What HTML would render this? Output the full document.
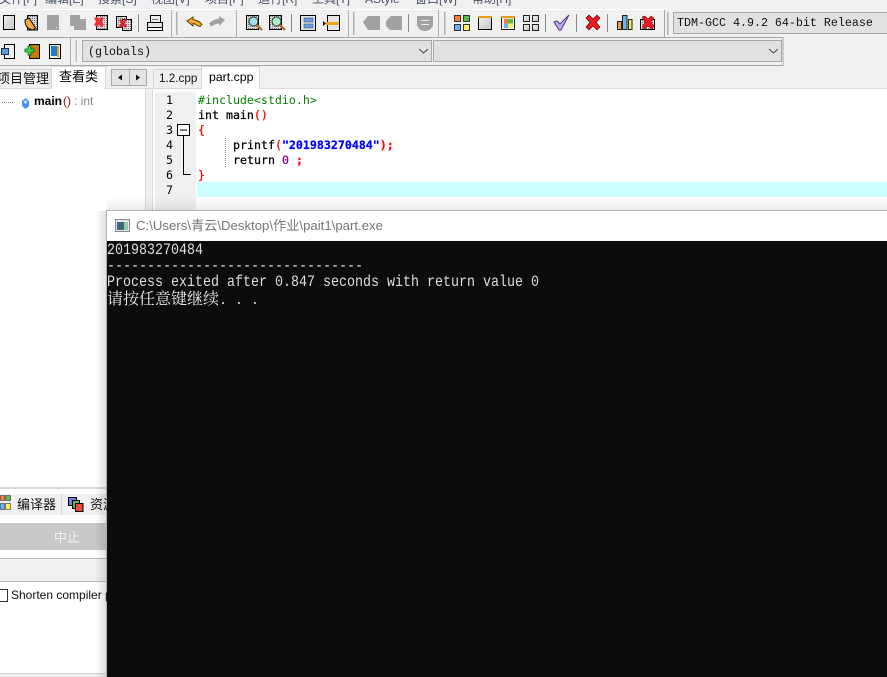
<!DOCTYPE html>
<html><head><meta charset="utf-8">
<style>
html,body{margin:0;padding:0;width:887px;height:677px;overflow:hidden;background:#f0f0f0}
body{position:relative;font-family:"Liberation Sans","Noto Sans CJK SC",sans-serif}
.a{position:absolute}
.t{position:absolute;white-space:pre;line-height:15px}
.ed{font-family:"DejaVu Sans Mono","Liberation Mono",monospace;font-size:11.62px;color:#000;left:198px}
.ln{font-family:"DejaVu Sans Mono",monospace;font-size:11.62px;color:#000;left:166px}
.b{font-weight:bold}
.s{-webkit-text-stroke:.25px currentColor}
.con{position:absolute;left:107px;font-family:"Liberation Mono","Noto Sans CJK SC",monospace;font-size:16px;line-height:16px;color:#dedede;white-space:pre;transform:scaleX(.8333);transform-origin:0 0}
.m{position:absolute;top:-8px;font-size:12px;line-height:14px;color:#4a5468;white-space:pre}
</style></head><body>
<div class="m" style="left:-1px">文件[F]</div><div class="m" style="left:45px">编辑[E]</div><div class="m" style="left:98px">搜索[S]</div><div class="m" style="left:151px">视图[V]</div><div class="m" style="left:205px">项目[P]</div><div class="m" style="left:258px">运行[R]</div><div class="m" style="left:312px">工具[T]</div><div class="m" style="left:365px">AStyle</div><div class="m" style="left:415px">窗口[W]</div><div class="m" style="left:472px">帮助[H]</div>

<svg class="a" style="left:0;top:0" width="887" height="677" viewBox="0 0 887 677">
<defs><linearGradient id="g" x1="0" y1="0" x2="1" y2="1"><stop offset="0" stop-color="#f2f2f2"/><stop offset="1" stop-color="#c4c4c4"/></linearGradient>
<pattern id="d" width="2" height="2" patternUnits="userSpaceOnUse"><rect width="2" height="2" fill="#d8d8d8"/><rect width="1" height="1" fill="#777"/></pattern></defs>
<!-- toolbar lines -->
<rect x="0" y="9" width="664" height="1" fill="#fff"/>
<rect x="0" y="37" width="783" height="1" fill="#a8a8a8"/>
<rect x="0" y="65" width="783" height="1" fill="#a8a8a8"/>
<rect x="70" y="38" width="1" height="27" fill="#b0b0b0"/>
<rect x="75.500" y="40" width="1.500" height="22" fill="#c0c0c0"/>
<rect x="664" y="10" width="1" height="27" fill="#a8a8a8"/>
<g fill="#b0b0b0">
<rect x="138" y="14" width="1" height="18" fill="#888"/><rect x="171" y="10" width="1" height="27"/><rect x="176" y="12" width="1.500" height="23"/>
<rect x="236" y="10" width="1" height="27"/><rect x="291" y="14" width="1" height="18" fill="#888"/><rect x="348" y="10" width="1" height="27"/><rect x="353" y="12" width="1.500" height="23"/>
<rect x="408" y="14" width="1" height="18" fill="#888"/><rect x="438" y="10" width="1" height="27"/><rect x="444" y="12" width="1.500" height="23"/>
<rect x="545" y="14" width="1" height="18" fill="#888"/><rect x="576" y="14" width="1" height="18" fill="#888"/><rect x="607" y="14" width="1" height="18" fill="#888"/>
<rect x="667" y="12" width="1.500" height="23"/>
</g>
<!-- new -->
<rect x="3.500" y="15.500" width="11" height="14" fill="url(#g)" stroke="#000"/>
<!-- open -->
<rect x="27.500" y="15.500" width="10" height="14.500" fill="url(#d)" stroke="#000"/>
<path d="M25 20 Q25 29 33 30 L35.500 28 L29 18Z" fill="#f5a742" stroke="#000"/>
<!-- disabled save -->
<rect x="47" y="15" width="12" height="15" fill="#a2a2a2"/><rect x="56" y="27" width="1" height="1" fill="#eee"/>
<path d="M70 15h10v4h6v11h-12v-4h-4z" fill="#a2a2a2"/>
<!-- close -->
<rect x="96.500" y="15.500" width="11" height="14" fill="url(#d)" stroke="#000"/>
<path d="M94 18l3-1 2 2 2-2 3 1-2 3.500 2 3.500-2 2-3-2-2 2-3-2 2-3.500z" fill="#f0303a"/>
<!-- close all -->
<rect x="116.500" y="16.500" width="10" height="11" fill="url(#d)" stroke="#000"/>
<rect x="122.500" y="19.500" width="9" height="11" fill="url(#d)" stroke="#000"/>
<path d="M119 20l2-1 2 2 2-2 2 1-2 3 2 3-2 2-2-2-2 2-2-2 2-3z" fill="#e02430"/>
<!-- print -->
<path d="M150.500 15.500h10v7h-10z" fill="#eee" stroke="#000"/>
<path d="M147.500 22.500h15v5h-15z" fill="#e8e8e8" stroke="#000"/>
<rect x="147.500" y="27.500" width="15" height="3" fill="#fff" stroke="#000"/>
<rect x="152" y="19" width="6" height="1" fill="#777"/>
<!-- undo -->
<path d="M187 21l6-4v2.500q6 1 9 5l-2 2-3-1q-2-2-4-2v2.500z" fill="#f3a828" stroke="#5a3a08" stroke-width=".9"/>
<path d="M225 20l-6-4v2.500q-6 1-10 5l2 3 4-2q2-1 4-1v2.500z" fill="#a2a2a2"/>
<!-- find -->
<rect x="246.500" y="15.500" width="12" height="14" fill="url(#d)" stroke="#000"/>
<circle cx="253.500" cy="21.500" r="4.500" fill="#9fe1f0" stroke="#333"/><path d="M257 25l5 5" stroke="#b56e10" stroke-width="2.200"/>
<rect x="269.500" y="15.500" width="12" height="14" fill="url(#d)" stroke="#000"/>
<circle cx="276.500" cy="21.500" r="4.500" fill="#a8f0c8" stroke="#333"/><path d="M280 25l5 5" stroke="#b56e10" stroke-width="2.200"/>
<!-- windows -->
<rect x="300.500" y="15.500" width="15" height="15" fill="#e4e4e4" stroke="#000"/>
<rect x="304" y="18" width="9" height="4" fill="#6d9ee0" stroke="#34557f" stroke-width=".6"/><rect x="304" y="24" width="9" height="4" fill="#6d9ee0" stroke="#34557f" stroke-width=".6"/>
<rect x="327.500" y="15.500" width="12" height="15" fill="#e4e4e4" stroke="#000"/>
<rect x="326" y="22" width="13" height="3" fill="#f2a11c"/><path d="M323 21l3 2.500-3 2.500z" fill="#000"/>
<!-- disabled group -->
<path d="M363 22l5-6h12v14h-12z" fill="#a2a2a2"/>
<path d="M386 21l5-5h11v14h-12l-4-4z" fill="#a2a2a2"/>
<path d="M417 16h16v9q-2 6-8 6t-8-6z" fill="#a2a2a2"/><rect x="421" y="20" width="8" height="1" fill="#eee"/><rect x="421" y="24" width="8" height="1" fill="#eee"/>
<!-- grid -->
<rect x="454.500" y="15.500" width="6" height="6" fill="#f57e3e" stroke="#333"/><rect x="463.500" y="15.500" width="6" height="6" fill="#57b947" stroke="#333"/><rect x="454.500" y="24.500" width="6" height="6" fill="#6cb1ee" stroke="#333"/><rect x="463.500" y="24.500" width="6" height="6" fill="#fdf05c" stroke="#333"/>
<rect x="478.500" y="16.500" width="13" height="13" fill="url(#g)" stroke="#000"/><rect x="478" y="16" width="14" height="2" fill="#e99b17"/>
<rect x="501.500" y="16.500" width="13" height="13" fill="#eee" stroke="#222"/><rect x="501" y="16" width="14" height="2" fill="#e99b17"/><rect x="504" y="19" width="4" height="4.500" fill="#f17d3c"/><rect x="508" y="19" width="5" height="4.500" fill="#5bba48"/><rect x="504" y="23.500" width="4" height="4.500" fill="#6cb1ee"/><rect x="508" y="23.500" width="5" height="4.500" fill="#fdf05c"/>
<g fill="url(#g)" stroke="#222"><rect x="523.500" y="15.500" width="6" height="6"/><rect x="532.500" y="15.500" width="6" height="6"/><rect x="523.500" y="24.500" width="6" height="6"/><rect x="532.500" y="24.500" width="6" height="6"/></g>
<!-- check -->
<path d="M554 22l3-1 3 3 9-9-8 15h-2z" fill="#c4a8f0" stroke="#4f3a86"/>
<!-- X -->
<path d="M589 15l4 4 4-4 3 3-4 4.500 4 4.500-3 3-4-4-4 4-3-3 4-4.500-4-4.500z" fill="#ee1820" stroke="#400" stroke-width=".6"/>
<!-- bars -->
<rect x="617.500" y="21.500" width="4" height="8" fill="#f29a4a" stroke="#222"/><rect x="622.500" y="15.500" width="4.500" height="14" fill="#6fb0e8" stroke="#222"/><rect x="628.500" y="19.500" width="3.500" height="10" fill="#f7ee50" stroke="#222"/>
<rect x="640.500" y="19.500" width="14" height="10" fill="url(#d)" stroke="#000"/>
<path d="M642 17l3-1 3 3 3-3 3 2-3 4 3 4-2 3-4-3-3 3-3-2 3-4.500z" fill="#ee1820" stroke="#400" stroke-width=".5"/>
<!-- row 2 icons -->
<rect x="4.500" y="44.500" width="10" height="14" fill="#eee" stroke="#000"/><rect x="1.500" y="48.500" width="7" height="6" fill="#5a9be0" stroke="#234"/>
<rect x="29.500" y="44.500" width="10" height="14" fill="#c77a12" stroke="#000"/>
<path d="M28 46h3v3h3v3h-3v3h-3v-3h-3v-3h3z" fill="#3dd63d" stroke="#063" stroke-width=".8"/>
<rect x="49.500" y="44.500" width="11" height="14" fill="#eee" stroke="#000"/><rect x="51" y="46" width="6" height="10" fill="#1f7fc8"/><rect x="57" y="46" width="2" height="11" fill="#e99b17"/>
<!-- combos -->
<rect x="782.500" y="37" width="1" height="29" fill="#a8a8a8"/>
<rect x="82.500" y="40.500" width="349" height="21" fill="#e1e1e1" stroke="#a8a8a8"/>
<rect x="433.500" y="40.500" width="348" height="21" fill="#e1e1e1" stroke="#a8a8a8"/>
<path d="M419 49l4.500 4 4.500-4M769 49l4.500 4 4.500-4" fill="none" stroke="#444"/>
<!-- TDM -->
<rect x="673.500" y="12.500" width="214" height="21" fill="#e1e1e1" stroke="#a8a8a8"/>
<!-- left tabs -->
<rect x="0" y="88" width="887" height="1" fill="#dcdcdc"/>
<rect x="-1" y="69.500" width="51" height="19" fill="#f0f0f0" stroke="#d8d8d8"/>
<rect x="51.500" y="66.500" width="54" height="22" fill="#fff" stroke="#d8d8d8"/>
<rect x="51.500" y="88" width="53" height="1" fill="#fff"/>
<rect x="111.500" y="69.500" width="35" height="16" fill="#e4e4e4" stroke="#aaa"/><rect x="129" y="70" width="1" height="15" fill="#aaa"/>
<path d="M118 77.500l4-3v6zM136 74.500l0 6 4-3z" fill="#111"/>
<rect x="0" y="89" width="146" height="400" fill="#fff"/>
<rect x="145" y="88" width="1" height="400" fill="#d8d8d8"/>
<!-- right tabs -->
<rect x="153.500" y="69.500" width="48" height="19" fill="#f0f0f0" stroke="#d8d8d8"/>
<rect x="201.500" y="66.500" width="58" height="22" fill="#fff" stroke="#d8d8d8"/>
<rect x="202" y="88" width="57" height="1" fill="#fff"/>
<rect x="152" y="89" width="735" height="125" fill="#fff"/>
<rect x="152" y="89" width="1" height="125" fill="#d8d8d8"/>
<rect x="155" y="92" width="41" height="122" fill="#f0f0f0"/>
<rect x="197" y="182" width="690" height="15" fill="#ccffff"/>
<path d="M225.500 138v30" stroke="#888" stroke-dasharray="1 1" fill="none"/>
<rect x="177.500" y="124.500" width="12" height="11" fill="#fff" stroke="#000"/><path d="M180 130h7" stroke="#000"/>
<path d="M183.500 136v38.500h7" stroke="#000" fill="none"/>
<!-- tree -->
<path d="M2 102.500h11" stroke="#888" stroke-dasharray="1 1"/>
<path d="M25.500 98l3.500 3v5l-3.500 3-3.500-3v-5z" fill="#4a90ea"/><path d="M25.500 100l2 2-2 2-2-2z" fill="#cfe6ff"/>
<!-- bottom panel -->
<rect x="0" y="488" width="108" height="189" fill="#fff"/>
<rect x="0" y="487" width="108" height="2" fill="#d8d8d8"/>
<rect x="0" y="494" width="108" height="21" fill="#f0f0f0"/>
<rect x="61" y="494" width="1" height="21" fill="#d8d8d8"/>
<rect x="0" y="523" width="108" height="27" fill="#c8c8c8"/>
<rect x="0" y="558" width="108" height="24" fill="#f0f0f0"/>
<rect x="0" y="558" width="108" height="1" fill="#bbb"/><rect x="0" y="581" width="108" height="1" fill="#bbb"/>
<rect x="0" y="673" width="108" height="1" fill="#d8d8d8"/><rect x="0" y="674" width="108" height="3" fill="#f0f0f0"/>
<rect x="-1.500" y="589.500" width="9" height="12" fill="#fff" stroke="#333"/>
<rect x="0.500" y="495.500" width="4" height="5" fill="#f57e3e" stroke="#333" stroke-width=".6"/><rect x="5.500" y="495.500" width="5" height="5" fill="#57b947" stroke="#333" stroke-width=".6"/><rect x="0.500" y="503.500" width="4" height="6" fill="#6cb1ee" stroke="#333" stroke-width=".6"/><rect x="5.500" y="503.500" width="5" height="6" fill="#fdf05c" stroke="#333" stroke-width=".6"/>
<rect x="68.500" y="497.500" width="8" height="8" fill="#7b7be0" stroke="#000"/><rect x="72.500" y="500.500" width="7" height="8" fill="#4fc04f" stroke="#000"/><rect x="75.500" y="503.500" width="7.500" height="8" fill="#ee4a3a" stroke="#000"/>
<!-- console shadow -->
<defs><linearGradient id="sh" x1="0" x2="1"><stop offset="0" stop-color="#000" stop-opacity="0"/><stop offset="1" stop-color="#000" stop-opacity=".13"/></linearGradient>
<linearGradient id="sv" x1="0" x2="0" y1="0" y2="1"><stop offset="0" stop-color="#000" stop-opacity="0"/><stop offset="1" stop-color="#000" stop-opacity=".08"/></linearGradient></defs>
<rect x="95" y="211" width="12" height="466" fill="url(#sh)"/>
<rect x="107" y="197" width="780" height="14" fill="url(#sv)"/>
<!-- console -->
<rect x="107" y="211" width="780" height="466" fill="#fff"/>
<rect x="107" y="241" width="780" height="436" fill="#0c0c0c"/>
<rect x="106" y="210" width="781" height="1" fill="#b0b0b0"/><rect x="106" y="210" width="1" height="467" fill="#b0b0b0"/>
<rect x="115.500" y="219.500" width="14" height="12" fill="#e8e8e8" stroke="#8a8a8a"/><rect x="117" y="222" width="7" height="8" fill="#3a6a78"/><rect x="124" y="222" width="4" height="8" fill="#9ac8a8"/>
</svg>

<div class="t" style="left:677px;top:16px;font-family:'Liberation Mono',monospace;font-size:11.67px;color:#111">TDM-GCC 4.9.2 64-bit Release</div>
<div class="t" style="left:88px;top:45px;font-family:'Liberation Mono',monospace;font-size:11.67px;color:#111">(globals)</div>
<div class="t" style="left:-3px;top:70px;font-size:13px;line-height:17px;color:#111">项目管理</div>
<div class="t" style="left:59px;top:68px;font-size:13px;line-height:17px;color:#000">查看类</div>
<div class="t" style="left:159px;top:71px;font-size:11.700px;line-height:16px;color:#111">1.2.cpp</div>
<div class="t" style="left:209px;top:69px;font-size:12.300px;line-height:16px;color:#000">part.cpp</div>
<div class="t" style="left:34px;top:94px;font-size:12px;font-weight:bold;color:#000">main</div>
<div class="t" style="left:63px;top:94px;font-size:12px;color:#8b1a1a">()</div>
<div class="t" style="left:74px;top:94px;font-size:12px;color:#888">: int</div>

<div class="t ln" style="top:93px">1</div><div class="t ln" style="top:108px">2</div><div class="t ln" style="top:123px">3</div><div class="t ln" style="top:138px">4</div><div class="t ln" style="top:153px">5</div><div class="t ln" style="top:168px">6</div><div class="t ln" style="top:183px">7</div>
<div class="t ed" style="top:93px;color:#008000">#include&lt;stdio.h&gt;</div>
<div class="t ed s" style="top:108px">int main<span class="s" style="color:#f00">()</span></div>
<div class="t ed s" style="top:123px;color:#f00">{</div>
<div class="t ed s" style="top:138px;left:233px">printf<span style="color:#f00">(</span><span class="b" style="color:#00f">"201983270484"</span><span class="b" style="color:#f00">);</span></div>
<div class="t ed s" style="top:153px;left:233px">return <span style="color:#800080">0</span> <span class="b" style="color:#f00">;</span></div>
<div class="t ed s" style="top:168px;color:#f00">}</div>

<div class="t" style="left:136px;top:218px;font-size:13.200px;color:#767676">C:\Users\青云\Desktop\作业\pait1\part.exe</div>
<div class="con" style="top:242px">201983270484</div>
<div class="con" style="top:258px">--------------------------------</div>
<div class="con" style="top:274px">Process exited after 0.847 seconds with return value 0</div>
<div class="con" style="top:290px;font-family:'Noto Serif CJK SC','Liberation Mono',serif;font-size:16px;transform:none;color:#e8e8e8">请按任意键继续<span style="font-family:'Liberation Mono',monospace;font-size:13.33px">. . .</span></div>

<div class="t" style="left:17px;top:496px;font-size:13px;line-height:17px;color:#111">编译器</div>
<div class="t" style="left:90px;top:496px;font-size:13px;line-height:17px;color:#111;width:17px;overflow:hidden">资源</div>
<div class="t" style="left:54px;top:529px;font-size:13px;line-height:17px;color:#f4f4f4">中止</div>
<div class="t" style="left:11px;top:588px;font-size:12px;color:#111;width:96px;overflow:hidden">Shorten compiler paths</div>
</body></html>
